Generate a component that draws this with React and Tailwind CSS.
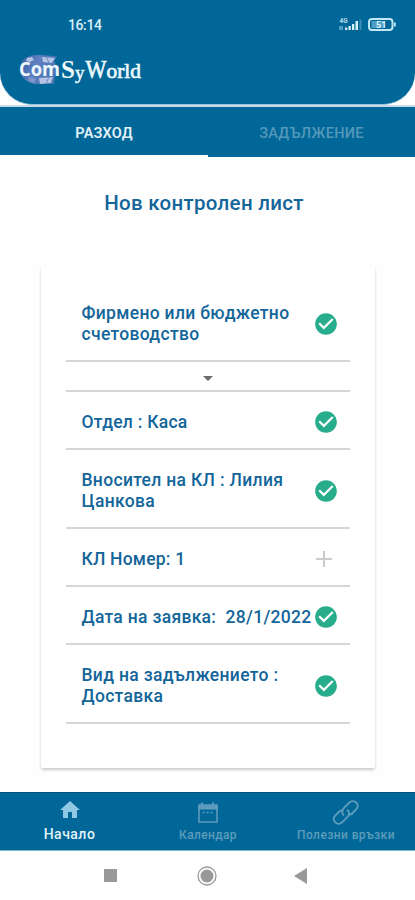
import React, { useState } from 'react';
import { MdCheckCircle, MdHome, MdArrowDropDown } from 'react-icons/md';

const rows = [
  { label: 'Фирмено или бюджетно счетоводство', done: true, height: 'h-[76px] pt-px', spacing: 'tracking-[0.32px]' },
  { label: '', dropdown: true, height: 'h-[30px]', spacing: '' },
  { label: 'Отдел : Каса', done: true, height: 'h-[58px] pt-[3px]', spacing: 'tracking-[0.26px] pt-[2px]' },
  { label: 'Вносител на КЛ : Лилия Цанкова', done: true, height: 'h-[79px] pt-[5px]', spacing: 'tracking-[0.32px]' },
  { label: 'КЛ Номер: 1', done: false, height: 'h-[58px] pt-[4px]', spacing: 'tracking-[0.2px] pt-px' },
  { label: 'Дата на заявка:  28/1/2022', done: true, height: 'h-[58px] pt-[3px]', spacing: 'tracking-[0.3px] pt-[2px]' },
  { label: 'Вид на задължението : Доставка', done: true, height: 'h-[79px] pt-[5px]', spacing: 'tracking-[0.32px]' },
];

const StatusIcons = () => (
  <svg width="60" height="18" viewBox="0 0 60 18" className="mt-[15px]">
    <text x="1.5" y="7.5" fontSize="7" fontWeight="700" fill="#b9dbea" fontFamily="Roboto, sans-serif" textLength="8" lengthAdjust="spacingAndGlyphs">4G</text>
    <rect x="1" y="11" width="4" height="4" fill="#4f9cc5" />
    <g fill="#d4f0f8">
      <rect x="7" y="12.5" width="2.3" height="2.5" />
      <rect x="10.5" y="11" width="2.3" height="4" />
      <rect x="14" y="9" width="2.3" height="6" />
      <rect x="17.5" y="6" width="2.5" height="9" />
    </g>
    <rect x="21.5" y="4.5" width="2" height="10.5" fill="#3c8cb5" />
    <rect x="31" y="4" width="23.5" height="11" rx="3" fill="none" stroke="#bfe7f4" strokeWidth="2" />
    <rect x="33.5" y="6" width="13" height="7" fill="#4d9fc6" />
    <path d="M56 7.5h1.8v4H56z" fill="#bfe7f4" />
    <text x="38" y="13" fontSize="9" fontWeight="700" fill="#e3f5fb" fontFamily="Roboto, sans-serif">51</text>
  </svg>
);

const Logo = () => (
  <svg width="130" height="36" viewBox="0 0 130 36" role="img" aria-label="ComSyWorld">
    <defs>
      <linearGradient id="globe" x1="0" y1="0" x2="1" y2="0.3">
        <stop offset="0" stopColor="#2f5fa3" />
        <stop offset="0.5" stopColor="#5f80c0" />
        <stop offset="1" stopColor="#4a76b3" />
      </linearGradient>
    </defs>
    <path d="M13 2.5Q23 1 39 3.5L36 8Q41 16 37 24L36 31H16Q5 28 2 20Q1 10 7 5Z" fill="url(#globe)" />
    <g fill="#b4c3e5">
      <path d="M9 5l5-1 2 3-4 2-4-1z" />
      <path d="M24 4l13 1-3 5-9-1z" />
      <path d="M21 25l14-1-2 6-11 1z" />
    </g>
    <path d="M10 24l8 2-2 4-5-2z" fill="#7e96cc" />
    <path d="M20 3Q12 17 21 30M28 3Q36 16 28 31" fill="none" stroke="#5e7fb5" strokeWidth="0.8" />
    <g fill="#edf8fb">
      <text x="1" y="22.5" fontSize="20" fontWeight="700" fontFamily="'Open Sans', sans-serif" textLength="41" lengthAdjust="spacingAndGlyphs">Com</text>
      <text x="43" y="25" fontSize="25" fontWeight="700" fontFamily="'Liberation Serif', serif">S</text>
      <text x="57" y="26" fontSize="19" fontFamily="'Liberation Serif', serif" stroke="#edf8fb" strokeWidth="0.5">y</text>
      <text x="67.5" y="25" fontSize="25" fontFamily="'Liberation Serif', serif" stroke="#edf8fb" strokeWidth="0.7" textLength="21" lengthAdjust="spacingAndGlyphs">W</text>
      <text x="88.5" y="25" fontSize="21" fontFamily="'Liberation Serif', serif" stroke="#edf8fb" strokeWidth="0.7" textLength="34.5" lengthAdjust="spacingAndGlyphs">orld</text>
    </g>
  </svg>
);

const CalendarIcon = () => (
  <svg width="22" height="22" viewBox="0 0 22 22" fill="none" stroke="#5d9cbc">
    <path d="M2 4h18v17H2z" strokeWidth="1.6" />
    <path d="M1.2 4h19.6v4.5H1.2zM4 1.5h2V4H4zM15 1.5h2V4h-2z" fill="#5d9cbc" stroke="none" />
    <path d="M5.5 11.5h2M9.5 11.5h2M13.5 11.5h2" strokeWidth="1.4" />
  </svg>
);

// Two interlocking loops of a chain
const LinkIcon = () => (
  <svg width="28" height="28" viewBox="0 0 28 28" fill="none" stroke="#5d9cbc" strokeWidth="1.9" strokeLinecap="round">
    <path d="M11.4 15.8C9.4 13.5 10 10.9 12 8.9L17.2 3.8C19.2 1.8 22.2 1.7 24.2 3.5C26.2 5.5 26.2 8.4 24.2 10.4L20.2 14.5" />
    <path d="M20.2 14.5Q19 15.5 17.8 15.5" />
    <path d="M15.6 11.2C17.7 13.5 17.2 16.2 15.2 18.2L10.1 23.3C8.1 25.3 5.2 25.3 3.2 23.4C1.3 21.4 1.3 18.6 3.2 16.6L7.4 12.5Q8.7 11.2 10.6 11.4" />
  </svg>
);

const Row = ({ row }) => {
  if (row.dropdown) {
    return (
      <div className={`${row.height} flex items-center justify-center border-b-2 border-[#d6d6d6] pt-[3px]`}>
        <MdArrowDropDown size={24} color="#6b6b6b" />
      </div>
    );
  }

  return (
    <div className={`${row.height} flex items-center border-b-2 border-[#d6d6d6] pl-4`}>
      <div className={`w-[234px] shrink-0 whitespace-pre-wrap text-[17.5px] leading-[21px] font-medium ${row.spacing}`}>
        {row.label}
      </div>
      {row.done ? (
        <MdCheckCircle size={26} color="#27ad8b" className="-ml-[3px] shrink-0" />
      ) : (
        <svg width="16" height="16" viewBox="0 0 16 16" stroke="#cccccc" strokeWidth="2" className="shrink-0">
          <path d="M8 0v16M0 8h16" />
        </svg>
      )}
    </div>
  );
};

const App = () => {
  const [activeTab, setActiveTab] = useState('expense');

  return (
    <div className="flex h-[900px] w-[415px] flex-col overflow-hidden bg-[#fefefe] font-['Roboto',sans-serif] text-[#13659a]">
      <header className="h-[105px] shrink-0 rounded-b-[32px] border-b border-[#9bc5da] bg-[#006798]">
        <div className="flex h-[50px] justify-between pr-[17px] pl-[68px]">
          <span className="mt-[15px] text-[14px] leading-5 font-medium tracking-[-0.4px] text-[#d9eff7]">16:14</span>
          <StatusIcons />
        </div>
        <div className="pt-[3px] pl-[18px]">
          <Logo />
        </div>
      </header>

      <div className="flex h-[52px] shrink-0 border-t-2 border-[#c5dae6] bg-[#006798] text-[14px] font-medium">
        <button
          onClick={() => setActiveTab('expense')}
          className={`w-[208px] pt-[5px] text-[14.5px] font-semibold tracking-[0.2px] text-[#e3f2f7] ${activeTab === 'expense' ? 'border-b-2 border-[#fefefe]' : ''}`}
        >
          РАЗХОД
        </button>
        <button
          onClick={() => setActiveTab('debt')}
          className={`flex-1 pt-[4px] text-[14.5px] tracking-[0.3px] text-[#5598ba] ${activeTab === 'debt' ? 'border-b-2 border-[#fefefe]' : ''}`}
        >
          ЗАДЪЛЖЕНИЕ
        </button>
      </div>

      <main className="flex flex-1 flex-col items-center">
        <h1 className="mt-[32px] pr-[7px] text-[20.5px] leading-7 font-medium tracking-[0.3px]">Нов контролен лист</h1>
        <section className="mt-[50px] h-[501px] w-[334px] rounded-[2px] bg-white px-[25px] pt-[19px] shadow-[0_2px_3px_rgba(0,0,0,0.2)]">
          {rows.map((row, index) => (
            <Row key={index} row={row} />
          ))}
        </section>
      </main>

      <nav className="flex h-[59px] shrink-0 border-t border-b border-t-[#00547e] border-b-[#8bb5ca] bg-[#006798] text-[#5d9cbc]">
        <div className="flex w-[139px] flex-col items-center text-[#e3f4fa]">
          <MdHome size={24} color="#8fc8e3" className="mt-[5px]" />
          <span className="mt-[2px] text-[14px] leading-5 font-medium tracking-[0.5px]">Начало</span>
        </div>
        <div className="flex w-[138px] flex-col items-center">
          <span className="mt-[8px]"><CalendarIcon /></span>
          <span className="mt-[2px] text-[12px] leading-5 font-medium tracking-[0.35px]">Календар</span>
        </div>
        <div className="flex w-[138px] flex-col items-center">
          <span className="mt-[6px] h-[26px]"><LinkIcon /></span>
          <span className="text-[12px] leading-5 font-medium tracking-[0.4px]">Полезни връзки</span>
        </div>
      </nav>

      <footer className="flex h-[49px] shrink-0 items-center pl-[104px]">
        <div className="h-[13px] w-[13px] bg-[#999999]" />
        <svg width="22" height="22" viewBox="0 0 22 22" className="ml-[79px]">
          <circle cx="11" cy="11" r="9" fill="none" stroke="#999999" strokeWidth="1.3" />
          <circle cx="11" cy="11" r="6.5" fill="#999999" />
        </svg>
        <svg width="13" height="16" viewBox="0 0 13 16" className="ml-[76px]" fill="#999999">
          <path d="M13 0v16L0 8z" />
        </svg>
      </footer>
    </div>
  );
};

export default App;
